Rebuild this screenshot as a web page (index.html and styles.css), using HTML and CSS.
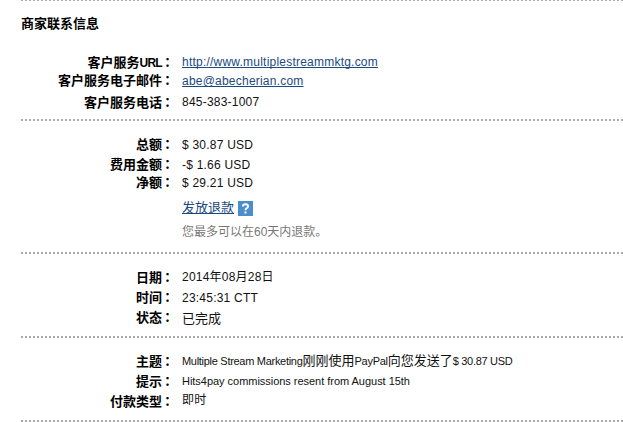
FILE: index.html
```html
<!DOCTYPE html>
<html lang="zh-CN">
<head>
    <meta charset="UTF-8">
    <title>商家联系信息</title>
    <link rel="stylesheet" href="styles.css">
</head>
<body>
    <main>
        <hr class="first">
        <section class="contact">
            <h2>商家联系信息</h2>
            <div class="row"><b>客户服务<span class="en">URL</span><i lang="zh-TW">：</i></b><p><a href="#">http://www.multiplestreammktg.com</a></p></div>
            <div class="row tight"><b>客户服务电子邮件<i lang="zh-TW">：</i></b><p class="low"><a href="#">abe@abecherian.com</a></p></div>
            <div class="row"><b>客户服务电话<i lang="zh-TW">：</i></b><p>845-383-1007</p></div>
        </section>
        <hr>
        <section class="amount">
            <div class="row"><b>总额<i lang="zh-TW">：</i></b><p class="low">$ 30.87 USD</p></div>
            <div class="row short"><b>费用金额<i lang="zh-TW">：</i></b><p class="low">-$ 1.66 USD</p></div>
            <div class="row"><b>净额<i lang="zh-TW">：</i></b><p class="low">$ 29.21 USD</p></div>
            <div class="refund">
                <a class="cn" href="#">发放退款</a>
                <svg class="help" viewBox="0 0 15 15" width="15" height="15">
                    <rect width="15" height="15" fill="#4a8fcb"/>
                    <path d="M5 5.5V5Q5 3.2 7.5 3.2T10 5.2Q10 6.5 8.7 7.2Q7.5 7.8 7.5 9.2M7.5 10.5V12.5" fill="none" stroke="#fff" stroke-width="2"/>
                </svg>
            </div>
            <p class="note">您最多可以在60天内退款。</p>
        </section>
        <hr>
        <section class="date">
            <div class="row"><b>日期<i lang="zh-TW">：</i></b><p>2014年08月28日</p></div>
            <div class="row"><b>时间<i lang="zh-TW">：</i></b><p class="low">23:45:31 CTT</p></div>
            <div class="row"><b>状态<i lang="zh-TW">：</i></b><p class="lower cn">已完成</p></div>
        </section>
        <hr>
        <section class="subject">
            <div class="row"><b>主题<i lang="zh-TW">：</i></b><p class="small narrow">Multiple Stream Marketing<span class="cn">刚刚使用</span>PayPal<span class="cn">向您发送了</span>$ 30.87 USD</p></div>
            <div class="row"><b>提示<i lang="zh-TW">：</i></b><p class="small">Hits4pay commissions resent from August 15th</p></div>
            <div class="row"><b>付款类型<i lang="zh-TW">：</i></b><p class="high">即时</p></div>
        </section>
        <hr>
    </main>
</body>
</html>
```

FILE: styles.css
```css
body {
    margin: 0;
    background: #fff;
    color: #111;
    font: 12px/16px "Liberation Sans", "Noto Sans CJK SC", sans-serif;
    overflow: hidden;
}
main {
    padding-left: 21px;
}
hr {
    height: 2px;
    margin: 0;
    border: 0;
    background: repeating-linear-gradient(to right, #aaa 0 2px, #fff 2px 4px);
}
hr.first {
    margin-top: -1px;
}
section {
    box-sizing: border-box;
    padding-top: 15px;
}
.contact {
    height: 118px;
}
.amount {
    height: 131px;
}
.date, .subject {
    height: 82px;
}
h2 {
    margin: 0 0 22px;
    height: 16px;
    font-size: 13px;
    line-height: 16px;
    color: #000;
}
.row {
    display: grid;
    grid-template-columns: 154px 1fr;
    column-gap: 7px;
    height: 20px;
    white-space: nowrap;
}
.contact .row {
    height: 18px;
}
.contact .tight {
    height: 22px;
}
.amount .short {
    height: 18px;
}
.row b {
    text-align: right;
    font-size: 13px;
    color: #000;
}
.row b .en {
    font-size: 12px;
    letter-spacing: -0.7px;
}
.row b i {
    margin: 0 1px 0 -1px;
    font-family: "Noto Sans CJK TC", sans-serif;
    font-style: normal;
}
p {
    margin: 0;
    height: 16px;
    letter-spacing: 0.22px;
}
.low {
    padding-top: 1px;
}
.lower {
    padding-top: 2px;
}
.high {
    margin-top: -1px;
}
.small {
    font-size: 11px;
    letter-spacing: -0.03px;
}
.narrow {
    letter-spacing: -0.29px;
}
.cn {
    font-size: 13px;
    letter-spacing: 0;
}
a {
    color: #1a4a80;
    text-decoration: underline;
    text-decoration-skip-ink: none;
}
.refund {
    display: flex;
    align-items: center;
    gap: 4px;
    height: 16px;
    margin: 6px 0 8px 161px;
}
.help {
    display: block;
}
.note {
    margin-left: 161px;
    letter-spacing: 0;
    color: #777;
}
```
